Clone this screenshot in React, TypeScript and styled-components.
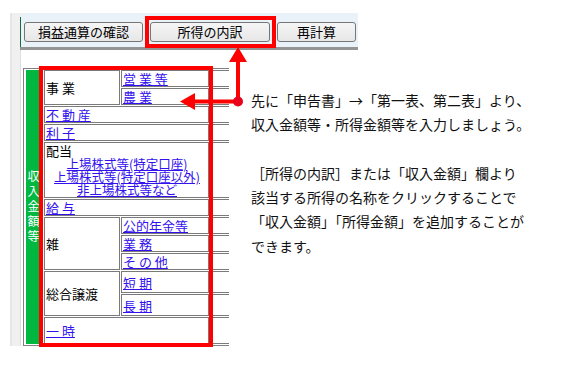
import React from "react";
import styled, { createGlobalStyle } from "styled-components";

const GlobalStyle = createGlobalStyle`
  html, body {
    margin: 0;
    padding: 0;
    background: #ffffff;
  }
  body {
    font-family: "Noto Sans CJK JP", "Noto Sans", sans-serif;
    color: #000000;
  }
`;

const Page = styled.div`
  position: relative;
  width: 572px;
  height: 365px;
  box-sizing: border-box;
  padding: 13px 0 0 10px;
  overflow: hidden;
`;

const Screen = styled.div`
  display: flex;
  align-items: stretch;
`;

const SideStrip = styled.div`
  width: 10px;
  box-sizing: border-box;
  background: #f0f0f0;
  border-left: 2px solid #e6e6e6;
`;

const MainColumn = styled.div`
  display: flex;
  flex-direction: column;
`;

const Toolbar = styled.div`
  width: 338px;
  height: 37px;
  box-sizing: border-box;
  padding-top: 4px;
  display: flex;
  background: #e9f2f8;
  border-bottom: 3px solid #949494;
`;

const ButtonGroup = styled.div`
  display: flex;
  align-items: flex-start;
  gap: 7px;
  padding: 5px 0 0 3px;
  border-left: 1px solid #1d6a3c;
`;

const ToolButton = styled.button<{ $width: number }>`
  width: ${(p) => p.$width}px;
  height: 20px;
  padding: 0;
  border: 1px solid #767676;
  border-radius: 3px;
  background: linear-gradient(#f5f5f5, #e7e7e7);
  font-family: "Noto Sans CJK JP", sans-serif;
  font-size: 13px;
  line-height: 18px;
  color: #000000;
`;

const BodyRow = styled.div`
  display: flex;
  align-items: flex-start;
`;

const Body = styled.div`
  width: 209px;
  box-sizing: border-box;
  padding: 18px 0 0 2px;
  background: #ffffff;
  border-left: 1px solid #dedede;
  overflow: hidden;
`;

const Form = styled.div`
  display: flex;
  padding: 1px 0 1px 2px;
  border-top: 1px solid #808080;
  border-left: 1px solid #808080;
  border-bottom: 1px solid #808080;
`;

const GreenBar = styled.div`
  flex: none;
  width: 14px;
  margin-right: 4px;
  background: #00b83f;
  display: flex;
  align-items: center;
  justify-content: center;
`;

const VerticalLabel = styled.span`
  writing-mode: vertical-rl;
  color: #ffffff;
  font-size: 12px;
  line-height: 14px;
  letter-spacing: 3px;
`;

const Grid = styled.div`
  flex: none;
  display: grid;
  grid-template-columns: 76px 88px 40px;
  grid-template-rows: 17px 17px 17px 17px 56px 17px 17px 17px 17px 22px 22px 27px;
  gap: 1px;
`;

const Cell = styled.div<{ $rows?: number; $cols?: number }>`
  grid-row: span ${(p) => p.$rows ?? 1};
  grid-column: span ${(p) => p.$cols ?? 1};
  box-sizing: border-box;
  border: 1px solid #7a7a7a;
  background: #ffffff;
  display: flex;
  align-items: center;
  padding-left: 1px;
  font-size: 13px;
  line-height: 15px;
  white-space: nowrap;
  overflow: hidden;
`;

const DividendCell = styled(Cell)`
  flex-direction: column;
  align-items: center;
  justify-content: flex-start;
  padding-top: 1px;
  font-size: 12.5px;
  line-height: 13px;
  overflow: visible;
`;

const DividendLabel = styled.span`
  align-self: flex-start;
  font-size: 13px;
`;

const ExtraCell = styled(Cell)`
  border-right: none;
`;

const Link = styled.a`
  color: #3311ee;
  text-decoration: underline;
  cursor: pointer;
`;

const Notes = styled.div`
  margin-left: 22px;
  padding-top: 38px;
  font-size: 14px;
  line-height: 24.3px;
  color: #111111;
  white-space: nowrap;
`;

const Paragraph = styled.p`
  margin: 0 0 24.3px;
`;

const Overlay = styled.svg`
  position: absolute;
  top: 0;
  left: 0;
  pointer-events: none;
`;

type Row = {
  label?: { text: string; rows: number };
  link?: string;
  wide?: boolean;
};

const ROWS: Row[] = [
  { label: { text: "事 業", rows: 2 }, link: "営 業 等" },
  { link: "農 業" },
  { link: "不 動 産", wide: true },
  { link: "利 子", wide: true },
  { wide: true },
  { link: "給 与", wide: true },
  { label: { text: "雑", rows: 3 }, link: "公的年金等" },
  { link: "業 務" },
  { link: "そ の 他" },
  { label: { text: "総合譲渡", rows: 2 }, link: "短 期" },
  { link: "長 期" },
  { link: "一 時", wide: true },
];

const App = () => {
  return (
    <Page>
      <GlobalStyle />
      <Screen>
        <SideStrip />
        <MainColumn>
          <Toolbar>
            <ButtonGroup>
              <ToolButton $width={119}>損益通算の確認</ToolButton>
              <ToolButton $width={120}>所得の内訳</ToolButton>
              <ToolButton $width={79}>再計算</ToolButton>
            </ButtonGroup>
          </Toolbar>

          <BodyRow>
            <Body>
              <Form>
                <GreenBar>
                  <VerticalLabel>収入金額等</VerticalLabel>
                </GreenBar>
                <Grid>
                  {ROWS.map((row, index) => (
                    <React.Fragment key={index}>
                      {row.label && (
                        <Cell $rows={row.label.rows}>{row.label.text}</Cell>
                      )}
                      {row.link ? (
                        <Cell $cols={row.wide ? 2 : 1}>
                          <Link>{row.link}</Link>
                        </Cell>
                      ) : (
                        <DividendCell $cols={2}>
                          <DividendLabel>配当</DividendLabel>
                          <Link>上場株式等(特定口座)</Link>
                          <Link>上場株式等(特定口座以外)</Link>
                          <Link>非上場株式等など</Link>
                        </DividendCell>
                      )}
                      <ExtraCell />
                    </React.Fragment>
                  ))}
                </Grid>
              </Form>
            </Body>

            <Notes>
              <Paragraph>
                先に「申告書」→「第一表、第二表」より、
                <br />
                収入金額等・所得金額等を入力しましょう。
              </Paragraph>
              <Paragraph>
                ［所得の内訳］または「収入金額」欄より
                <br />
                該当する所得の名称をクリックすることで
                <br />
                「収入金額」「所得金額」を追加することが
                <br />
                できます。
              </Paragraph>
            </Notes>
          </BodyRow>
        </MainColumn>
      </Screen>

      {/* 注釈（赤枠・矢印） */}
      <Overlay width={572} height={365} viewBox="0 0 572 365">
        <g fill="none" stroke="#ff0000" strokeWidth={4}>
          <rect x={147} y={18} width={127} height={28} />
          <rect x={41} y={68} width={170} height={277} />
          <line x1={238} y1={60} x2={238} y2={101.5} />
          <line x1={193} y1={101.5} x2={238} y2={101.5} />
        </g>
        <g fill="#ff0000">
          <polygon points="238,47 229,62 247,62" />
          <polygon points="180,101.5 195,93 195,110" />
          <circle cx={238} cy={101.5} r={5} fill="#e8001c" />
        </g>
      </Overlay>
    </Page>
  );
};

export default App;
